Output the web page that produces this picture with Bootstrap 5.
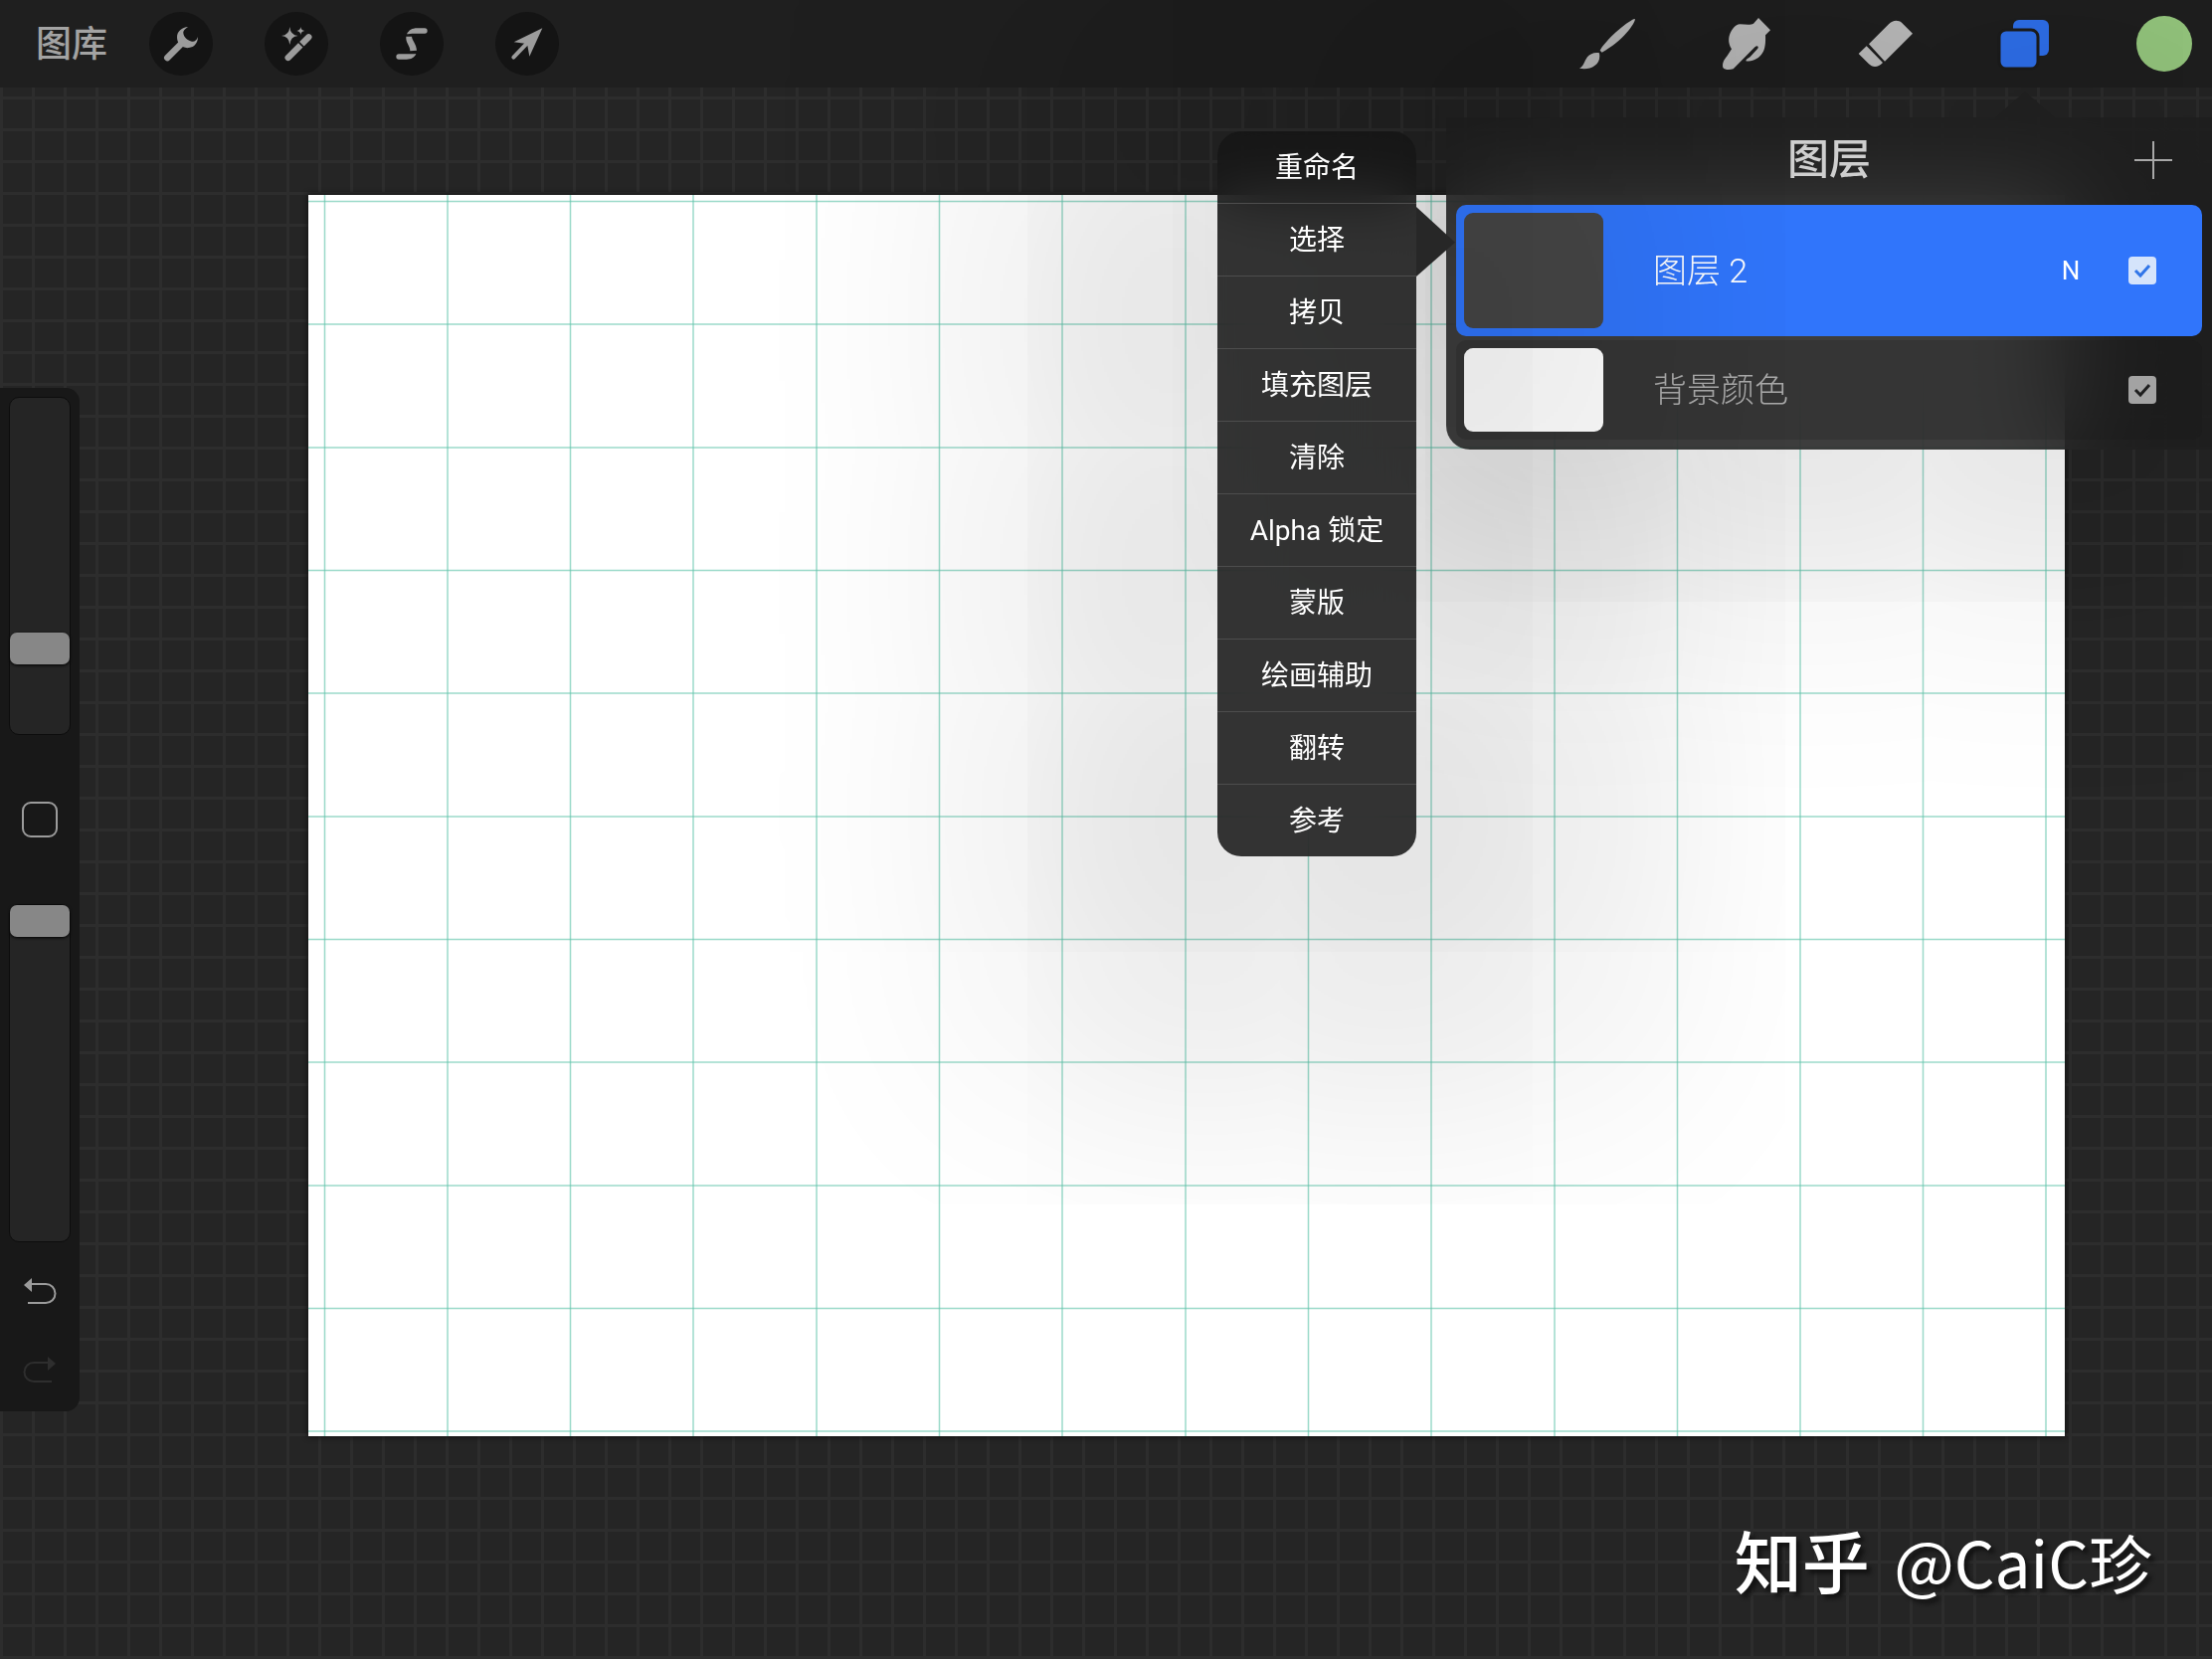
<!DOCTYPE html>
<html lang="zh-CN">
<head>
<meta charset="utf-8">
<meta name="viewport" content="width=device-width, initial-scale=1">
<title>图层</title>
<link href="https://cdn.jsdelivr.net/npm/bootstrap@5.3.0/dist/css/bootstrap.min.css" rel="stylesheet">
<style>
  body {
    font-family: Roboto, "Noto Sans CJK SC", sans-serif;
    color: #fff;
    background-color: #252525;
    background-image:
      linear-gradient(90deg, #2d2d2d 3px, transparent 3px),
      linear-gradient(#2d2d2d 3px, transparent 3px);
    background-size: 32px 32px;
    background-position: 0 0, 0 1px;
    overflow-x: hidden;
  }
  button { padding: 0; border: 0; background: none; color: inherit; }
  svg { display: block; }

  /* top toolbar */
  .toolbar { height: 88px; padding: 0 20px 0 36px; background: #1f1f1f; }
  .toolbar-start { gap: 52px; }
  .toolbar-end { gap: 84px; color: #bdbdbd; }
  .gallery-link { font-size: 36px; font-weight: 500; line-height: 44px; color: #a3a3a3; margin-right: -10px; padding-top: 2px; }
  .round-tool { width: 64px; height: 64px; border-radius: 50%; background: #141414; color: #9c9c9c; }
  .paint-tool { width: 56px; height: 56px; }
  .paint-tool.active { color: #2f71ef; }
  .swatch { border-radius: 50%; background: #98cb80; }

  /* side bar */
  .sidebar { width: 80px; margin-top: 302px; padding: 9px 0 12px; gap: 23px; background: #181818; border-radius: 0 14px 14px 0; }
  .v-slider {
    appearance: none; -webkit-appearance: none;
    writing-mode: vertical-lr; direction: rtl;
    width: 62px; height: 340px; margin: 0;
    background: #252525; border: 1px solid #0d0d0d; border-radius: 10px;
  }
  .v-slider::-webkit-slider-thumb {
    -webkit-appearance: none;
    width: 60px; height: 32px; border-radius: 7px;
    background: #878787; box-shadow: 0 1px 3px #000;
  }
  .modify-btn { width: 36px; height: 36px; margin: 44px 0; border: 2px solid #9b9b9b; border-radius: 9px; }
  .history-btn { width: 56px; height: 56px; color: #9b9b9b; }
  .history-btn:disabled { color: #2e2e2e; }

  /* drawing */
  .artboard { margin: 108px 148px 0 230px; background: #fff; box-shadow: 0 0 5px 1px #111; }

  /* popovers */
  .popovers { padding-top: 30px; gap: 30px; }
  .layer-menu {
    width: 200px; margin-top: 14px; z-index: 2;
    border-radius: 24px;
    background: rgba(21, 21, 21, .87);
    backdrop-filter: blur(30px);
    box-shadow: 0 0 320px 220px rgba(0, 0, 0, .11);
  }
  .layer-menu::after {
    content: ""; position: absolute; left: 100%; top: 76px;
    width: 39px; height: 70px; background: #272727;
    clip-path: polygon(0 0, 100% 51%, 0 100%);
  }
  .layer-menu button { height: 73px; padding-top: 2px; font-size: 28px; line-height: 70px; border-top: 1px solid #4d4d4d; }
  .layer-menu li:first-child button { height: 72px; border-top: 0; }
  .layers-panel {
    width: 770px; padding: 0 10px 10px;
    border-radius: 0 0 0 24px;
    background: rgba(29, 29, 29, .86);
    backdrop-filter: blur(50px);
    box-shadow: 0 0 280px 110px rgba(0, 0, 0, .14);
  }
  .layers-panel::before {
    content: ""; position: absolute; right: 158px; bottom: 100%;
    width: 60px; height: 26px; background: #1f1f1f;
    clip-path: polygon(50% 0, 100% 100%, 0 100%);
  }
  .panel-head { height: 88px; padding-bottom: 3px; }
  .panel-title { font-size: 42px; font-weight: 500; line-height: 48px; color: #cfcfcf; }
  .add-btn { right: 26px; color: #a8a8a8; }
  .layer-list { gap: 4px; }
  .layer-row { padding: 8px 46px 8px 8px; border-radius: 10px; background: rgba(20, 20, 20, .2); color: #ababab; }
  .layer-row.selected { background: #3075fb; color: #fff; }
  .thumb { width: 140px; height: 84px; margin-right: 50px; border-radius: 9px; background: #fff; }
  .selected .thumb { height: 116px; background: #464646; }
  .layer-name { font-size: 34px; font-weight: 300; line-height: 48px; }
  .blend-btn { width: 28px; margin-right: 44px; font-size: 26px; line-height: 32px; }
  .tick {
    appearance: none; -webkit-appearance: none;
    width: 28px; height: 28px; margin: 0; border-radius: 4px;
    background: #a3a3a3;
  }
  .selected .tick { background: #d5e4fb; }
  .tick-box { width: 28px; height: 28px; color: #1e1e1e; }
  .selected .tick-box { color: #3075e8; }
  .tick-box svg { pointer-events: none; }

  /* signature */
  .signature { padding: 76px 60px 48px 0; font-family: "Noto Sans CJK SC", sans-serif; font-size: 64px; line-height: 96px; text-shadow: 4px 4px 4px #111; }
  .signature strong { font-size: 68px; font-weight: 500; margin-right: 10px; }
</style>
</head>
<body class="d-flex flex-column min-vh-100">

<header class="toolbar d-flex align-items-center justify-content-between">
  <nav class="toolbar-start d-flex align-items-center" aria-label="工具">
    <a href="#" class="gallery-link text-decoration-none">图库</a>
    <button type="button" class="round-tool" aria-label="操作">
      <svg width="64" height="64" viewBox="0 6 192 192" fill="currentColor"><path d="M55 144 100 99" stroke="currentColor" stroke-width="20" stroke-linecap="round"/><path d="M118 51C98 52 84 65 84 82C84 90 86 95 88 98L103 112C108 114 113 115 120 114C136 112 147 100 147 81C143 92 137 96 129 95C116 93 104 83 103 70C102 62 110 55 118 51Z"/></svg>
    </button>
    <button type="button" class="round-tool" aria-label="调整">
      <svg width="64" height="64" viewBox="348 6 192 192" fill="currentColor"><path d="M419 144 481 82" stroke="currentColor" stroke-width="19" stroke-linecap="round"/><path d="M448 94 468 114" stroke="#141414" stroke-width="5"/><path d="M424 51Q426 76 449 78Q426 80 424 105Q422 80 399 78Q422 76 424 51ZM457 51Q458 62 469 63Q458 64 457 76Q456 64 445 63Q456 62 457 51Z"/></svg>
    </button>
    <button type="button" class="round-tool" aria-label="选取">
      <svg width="64" height="64" viewBox="696 6 192 192" fill="currentColor"><path d="M777 73C783 61 793 55 808 55L831 55A8 8 0 0 1 831 71L800 71C790 71 783 72 777 73ZM775 80L792 80C793 92 806 102 807 122L787 124C787 106 773 100 775 80ZM805 132C800 144 790 149 776 149L753 149A8 8 0 0 1 753 133L785 133C793 133 800 133 805 132Z"/></svg>
    </button>
    <button type="button" class="round-tool" aria-label="变换">
      <svg width="64" height="64" viewBox="1044 6 192 192" fill="currentColor"><path d="M1099 143 1140 100" stroke="currentColor" stroke-width="12" stroke-linecap="round"/><path d="M1186 55 1147 140 1141 107 1133 101 1100 97Z"/></svg>
    </button>
  </nav>
  <nav class="toolbar-end d-flex align-items-center" aria-label="绘画">
    <button type="button" class="paint-tool" aria-label="画笔">
      <svg width="56" height="56" viewBox="24 18 168 168" fill="currentColor"><path d="M191 27C197 32 160 92 92 128L86 122C110 82 175 30 191 27ZM24 176C38 170 38 155 48 142C56 132 70 127 84 130C87 148 82 160 70 168C58 178 38 179 24 176Z"/></svg>
    </button>
    <button type="button" class="paint-tool" aria-label="涂抹">
      <svg width="56" height="56" viewBox="444 18 168 168" fill="currentColor"><path d="M564 24L600 61L585 76C586 100 584 118 576 130C566 146 546 158 526 154C526 148 534 146 540 140L562 116C566 110 560 106 554 111L488 178C476 182 462 181 457 174C454 160 460 150 470 138L483 118C474 104 472 88 478 72C484 58 494 44 508 43C524 43 540 46 549 41Z"/></svg>
    </button>
    <button type="button" class="paint-tool" aria-label="擦除">
      <svg width="56" height="56" viewBox="864 18 168 168" fill="currentColor"><path d="M897 103L957 43C968 30 985 29 996 38L1029 71L945 155ZM890 109L939 159C925 174 908 174 897 163L866 132Z"/></svg>
    </button>
    <button type="button" class="paint-tool active" aria-label="图层" aria-expanded="true">
      <svg width="56" height="56" viewBox="0 0 56 56" fill="currentColor"><rect x="16" y="4" width="36" height="36" rx="6"/><rect x="2" y="14" width="39" height="39" rx="7" stroke="#1c1c1c" stroke-width="3"/></svg>
    </button>
    <button type="button" class="paint-tool swatch" aria-label="颜色"></button>
  </nav>
</header>

<main class="position-relative d-flex align-items-start">
  <aside class="sidebar d-flex flex-column align-items-center flex-shrink-0">
    <input type="range" class="v-slider" min="0" max="100" value="23" aria-label="画笔尺寸">
    <button type="button" class="modify-btn" aria-label="修改"></button>
    <input type="range" class="v-slider" min="0" max="100" value="100" aria-label="不透明度">
    <button type="button" class="history-btn" aria-label="撤销">
      <svg width="56" height="56" viewBox="0 0 56 56"><path d="M12 20 20 13V27Z" fill="currentColor"/><path d="M18 19H34A9 9 0 0 1 34 38H16" fill="none" stroke="currentColor" stroke-width="2"/></svg>
    </button>
    <button type="button" class="history-btn" disabled aria-label="重做">
      <svg width="56" height="56" viewBox="0 0 56 56"><path d="M44 20 36 13V27Z" fill="currentColor"/><path d="M38 19H22A9 9 0 0 0 22 38H40" fill="none" stroke="currentColor" stroke-width="2"/></svg>
    </button>
  </aside>

  <div class="artboard flex-grow-1">
    <svg class="w-100" viewBox="0 0 1766 1248" fill="none" stroke="#5fc4aa" stroke-opacity=".62" stroke-width="1.5" role="img" aria-label="画布">
      <path d="M16.500 0V1248M140 0V1248M263.500 0V1248M387 0V1248M511 0V1248M634.500 0V1248M758 0V1248M882 0V1248M1005.500 0V1248M1129 0V1248M1253 0V1248M1376.500 0V1248M1500 0V1248M1623.500 0V1248M1747 0V1248"/>
      <path d="M0 6.500H1766M0 130H1766M0 254H1766M0 377.500H1766M0 501H1766M0 625H1766M0 748.500H1766M0 872H1766M0 996H1766M0 1119.500H1766M0 1243H1766"/>
    </svg>
  </div>

  <div class="popovers position-absolute top-0 end-0 d-flex align-items-start">
    <ul class="layer-menu position-relative list-unstyled mb-0">
      <li><button type="button" class="w-100">重命名</button></li>
      <li><button type="button" class="w-100">选择</button></li>
      <li><button type="button" class="w-100">拷贝</button></li>
      <li><button type="button" class="w-100">填充图层</button></li>
      <li><button type="button" class="w-100">清除</button></li>
      <li><button type="button" class="w-100">Alpha 锁定</button></li>
      <li><button type="button" class="w-100">蒙版</button></li>
      <li><button type="button" class="w-100">绘画辅助</button></li>
      <li><button type="button" class="w-100">翻转</button></li>
      <li><button type="button" class="w-100">参考</button></li>
    </ul>
    <section class="layers-panel position-relative">
      <div class="panel-head position-relative d-flex align-items-center justify-content-center">
        <h1 class="panel-title mb-0">图层</h1>
        <button type="button" class="add-btn position-absolute" aria-label="新建图层">
          <svg width="48" height="40" viewBox="0 0 48 40" stroke="currentColor" stroke-width="2"><path d="M6 20H44M25 1V39"/></svg>
        </button>
      </div>
      <div class="layer-list d-flex flex-column">
        <div class="layer-row selected d-flex align-items-center">
          <div class="thumb"></div>
          <label class="layer-name me-auto" for="layer2">图层 2</label>
          <button type="button" class="blend-btn" aria-label="混合模式">N</button>
          <div class="tick-box position-relative">
            <input type="checkbox" class="tick d-block" id="layer2" checked>
            <svg class="position-absolute top-0 start-0" width="28" height="28" viewBox="0 0 28 28" fill="none" stroke="currentColor" stroke-width="3"><path d="M7 14 12 19 21 9"/></svg>
          </div>
        </div>
        <div class="layer-row d-flex align-items-center">
          <div class="thumb"></div>
          <label class="layer-name me-auto" for="bgcolor">背景颜色</label>
          <div class="tick-box position-relative">
            <input type="checkbox" class="tick d-block" id="bgcolor" checked>
            <svg class="position-absolute top-0 start-0" width="28" height="28" viewBox="0 0 28 28" fill="none" stroke="currentColor" stroke-width="3"><path d="M7 14 12 19 21 9"/></svg>
          </div>
        </div>
      </div>
    </section>
  </div>
</main>

<footer class="signature text-end"><strong>知乎</strong> @CaiC珍</footer>

<script src="https://cdn.jsdelivr.net/npm/bootstrap@5.3.0/dist/js/bootstrap.bundle.min.js"></script>
</body>
</html>
